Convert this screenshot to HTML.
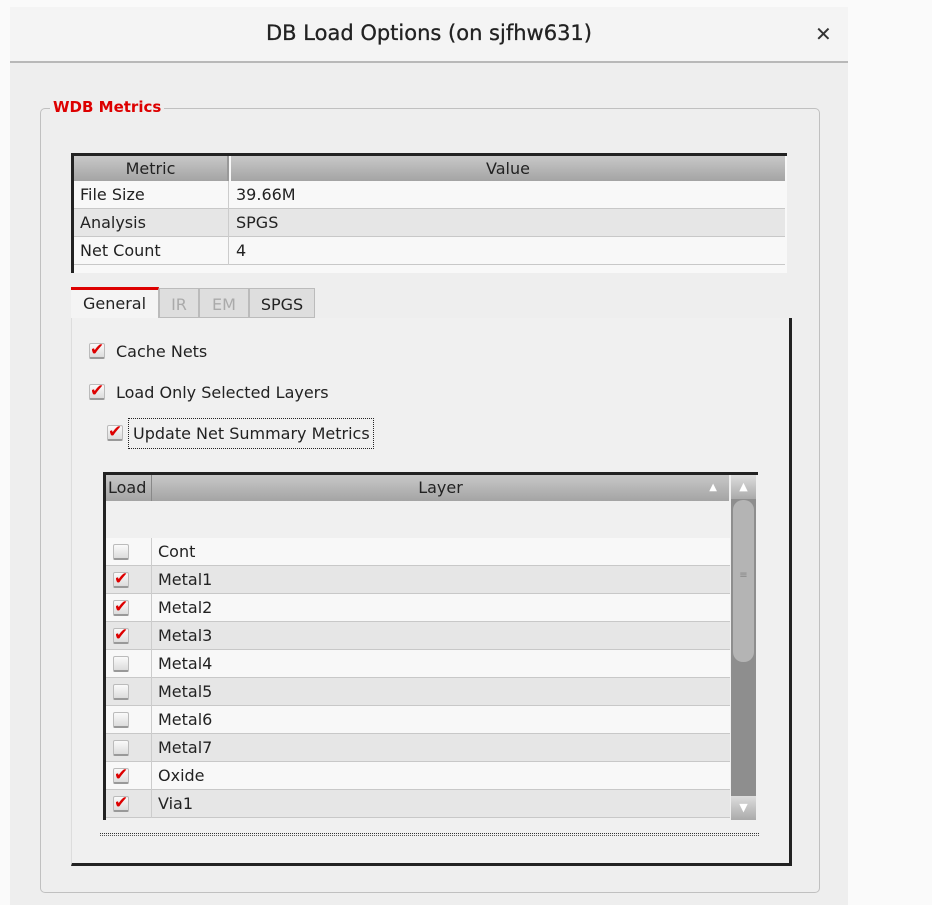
<!DOCTYPE html>
<html><head><meta charset="utf-8"><style>
*{box-sizing:border-box;margin:0;padding:0}
body{width:932px;height:905px;background:#fafafa;position:relative;overflow:hidden;font-family:"DejaVu Sans","Liberation Sans",sans-serif;color:#222}
.a{position:absolute}
.win{left:10px;top:7px;width:838px;height:898px;background:#eeeeee}
.title{left:10px;top:7px;width:838px;height:56px;background:#f4f4f4;border-bottom:2px solid #b8b8b8}
.hdr{background:linear-gradient(#c8c8c8,#a4a4a4);font-size:16px;text-align:center;line-height:25px;color:#222}
.row{height:28px;font-size:16px;line-height:28px;border-bottom:1px solid #c8c8c8}
.w{background:#f8f8f8}.g{background:#e6e6e6}
.cb{width:16px;height:16px;background:linear-gradient(#fafafa,#dcdcdc);border:1px solid #bbb;border-bottom:2px solid #999;border-radius:2px}
.ck{color:#d00;font-size:17px;font-weight:bold;line-height:13px;text-align:center}
.lbl{font-size:16px}
</style></head><body>
<div class="a win"></div>
<div class="a title"></div>
<div class="a" style="left:10px;top:21px;width:838px;text-align:center;font-size:21px;color:#222;-webkit-text-stroke:0.3px #222">DB Load Options (on sjfhw631)</div>
<div class="a" style="left:815px;top:22px;font-size:20px;font-weight:bold;color:#333">✕</div>

<div class="a" style="left:40px;top:108px;width:780px;height:785px;border:1px solid #c0c0c0;border-radius:5px"></div>
<div class="a" style="left:50px;top:98px;background:#eeeeee;padding:0 3px;color:#d00;font-weight:bold;font-size:15px">WDB Metrics</div>

<div class="a" style="left:71px;top:153px;width:716px;height:120px;background:#f8f8f8;border-top:3px solid #222;border-left:3px solid #222"></div>
<div class="a hdr" style="left:74px;top:156px;width:155px;height:25px;border-right:2px solid #999">Metric</div>
<div class="a hdr" style="left:231px;top:156px;width:554px;height:25px">Value</div>
<div class="a" style="left:74px;top:181px;width:711px">
<div class="row w"><span style="display:inline-block;width:155px;padding-left:6px;border-right:1px solid #ccc">File Size</span><span style="padding-left:7px">39.66M</span></div>
<div class="row g"><span style="display:inline-block;width:155px;padding-left:6px;border-right:1px solid #ccc">Analysis</span><span style="padding-left:7px">SPGS</span></div>
<div class="row w"><span style="display:inline-block;width:155px;padding-left:6px;border-right:1px solid #ccc">Net Count</span><span style="padding-left:7px">4</span></div>
</div>

<div class="a" style="left:71px;top:287px;width:88px;height:32px;background:#f4f4f4;border-top:3px solid #d00;border-right:1px solid #bbb;font-size:16px;text-align:center;line-height:28px">General</div>
<div class="a" style="left:159px;top:288px;width:40px;height:30px;background:#dedede;border:1px solid #bbb;font-size:16px;text-align:center;line-height:32px;color:#aaa">IR</div>
<div class="a" style="left:199px;top:288px;width:50px;height:30px;background:#dedede;border:1px solid #bbb;font-size:16px;text-align:center;line-height:32px;color:#aaa">EM</div>
<div class="a" style="left:249px;top:288px;width:66px;height:30px;background:#dedede;border:1px solid #bbb;font-size:16px;text-align:center;line-height:32px;color:#222">SPGS</div>
<div class="a" style="left:71px;top:318px;width:721px;height:548px;background:#f0f0f0;border-right:3px solid #222;border-bottom:3px solid #222;border-left:1px solid #ddd"></div>

<div class="a cb ck" style="left:89px;top:343px">✔</div><div class="a lbl" style="left:116px;top:342px">Cache Nets</div>
<div class="a cb ck" style="left:89px;top:384px">✔</div><div class="a lbl" style="left:116px;top:383px">Load Only Selected Layers</div>
<div class="a cb ck" style="left:107px;top:425px">✔</div>
<div class="a" style="left:128px;top:418px;width:246px;height:31px;border:1px dotted #222"></div>
<div class="a lbl" style="left:133px;top:424px">Update Net Summary Metrics</div>

<div class="a" style="left:103px;top:472px;width:655px;height:348px;background:#f0f0f0;border-top:3px solid #222;border-left:3px solid #222"></div>
<div class="a hdr" style="left:106px;top:475px;width:46px;height:26px;border-right:1px solid #888;text-align:left;padding-left:2px">Load</div>
<div class="a hdr" style="left:152px;top:475px;width:577px;height:26px">Layer<span style="position:absolute;right:12px;top:0;font-size:10px;color:#fff">▲</span></div>
<div class="a" style="left:106px;top:538px;width:624px">
<div class="row w"><span style="display:inline-block;width:46px;border-right:1px solid #ccc;height:28px;vertical-align:top;position:relative"><span class="a cb" style="left:7px;top:6px"></span></span><span style="padding-left:6px">Cont</span></div>
<div class="row g"><span style="display:inline-block;width:46px;border-right:1px solid #ccc;height:28px;vertical-align:top;position:relative"><span class="a cb ck" style="left:7px;top:6px">✔</span></span><span style="padding-left:6px">Metal1</span></div>
<div class="row w"><span style="display:inline-block;width:46px;border-right:1px solid #ccc;height:28px;vertical-align:top;position:relative"><span class="a cb ck" style="left:7px;top:6px">✔</span></span><span style="padding-left:6px">Metal2</span></div>
<div class="row g"><span style="display:inline-block;width:46px;border-right:1px solid #ccc;height:28px;vertical-align:top;position:relative"><span class="a cb ck" style="left:7px;top:6px">✔</span></span><span style="padding-left:6px">Metal3</span></div>
<div class="row w"><span style="display:inline-block;width:46px;border-right:1px solid #ccc;height:28px;vertical-align:top;position:relative"><span class="a cb" style="left:7px;top:6px"></span></span><span style="padding-left:6px">Metal4</span></div>
<div class="row g"><span style="display:inline-block;width:46px;border-right:1px solid #ccc;height:28px;vertical-align:top;position:relative"><span class="a cb" style="left:7px;top:6px"></span></span><span style="padding-left:6px">Metal5</span></div>
<div class="row w"><span style="display:inline-block;width:46px;border-right:1px solid #ccc;height:28px;vertical-align:top;position:relative"><span class="a cb" style="left:7px;top:6px"></span></span><span style="padding-left:6px">Metal6</span></div>
<div class="row g"><span style="display:inline-block;width:46px;border-right:1px solid #ccc;height:28px;vertical-align:top;position:relative"><span class="a cb" style="left:7px;top:6px"></span></span><span style="padding-left:6px">Metal7</span></div>
<div class="row w"><span style="display:inline-block;width:46px;border-right:1px solid #ccc;height:28px;vertical-align:top;position:relative"><span class="a cb ck" style="left:7px;top:6px">✔</span></span><span style="padding-left:6px">Oxide</span></div>
<div class="row g"><span style="display:inline-block;width:46px;border-right:1px solid #ccc;height:28px;vertical-align:top;position:relative"><span class="a cb ck" style="left:7px;top:6px">✔</span></span><span style="padding-left:6px">Via1</span></div>
</div>
<div class="a" style="left:731px;top:475px;width:25px;height:345px;background:#8e8e8e"></div>
<div class="a" style="left:731px;top:475px;width:25px;height:24px;background:linear-gradient(#ddd,#aaa);color:#fff;font-size:11px;text-align:center;line-height:24px">▲</div>
<div class="a" style="left:733px;top:500px;width:21px;height:162px;background:#b4b4b4;border-radius:10px;color:#888;font-size:10px;text-align:center;padding-top:70px">≡</div>
<div class="a" style="left:731px;top:796px;width:25px;height:24px;background:linear-gradient(#ddd,#aaa);color:#fff;font-size:11px;text-align:center;line-height:24px">▼</div>
<div class="a" style="left:100px;top:833px;width:659px;height:3px;border-top:1px dotted #333;border-bottom:1px dotted #555"></div>
</body></html>
